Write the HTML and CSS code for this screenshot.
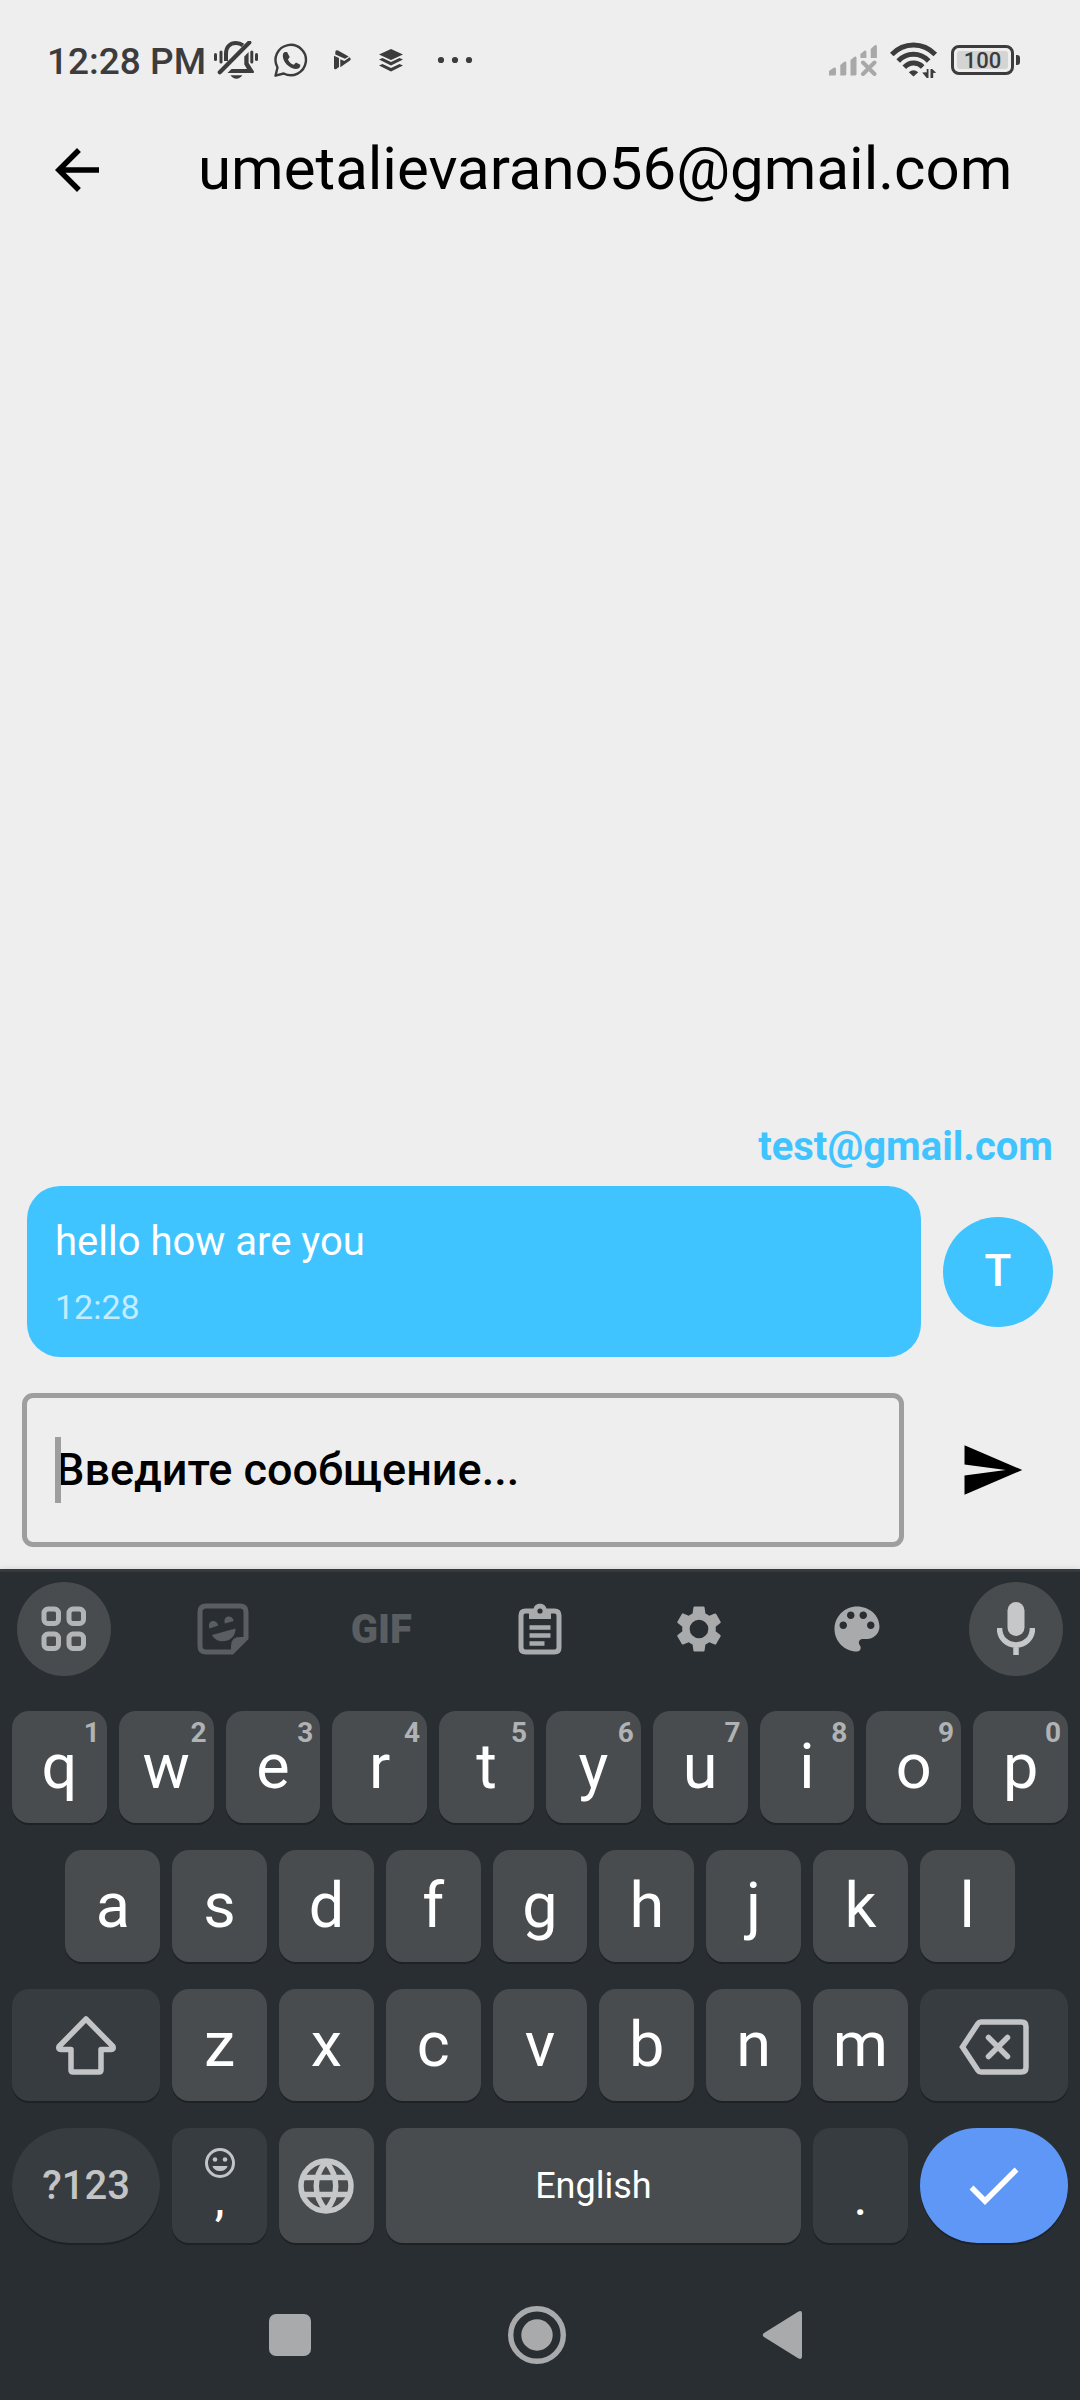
FILE: index.html
```html
<!DOCTYPE html>
<html lang="ru">
<head>
<meta charset="utf-8">
<meta name="viewport" content="width=device-width, initial-scale=1">
<title>Chat</title>
<link rel="stylesheet" href="styles.css">
</head>
<body>
<div class="screen">
  <div class="status">
    <span class="clock">12:28 PM</span>
    <div class="notices">
      <svg width="44" height="38" viewBox="0 0 44 38" fill="currentColor">
        <rect x="0" y="12" width="3" height="8" rx="1.500"/><rect x="5.500" y="9.500" width="3" height="13" rx="1.500"/>
        <rect x="36.300" y="9.500" width="3" height="13" rx="1.500"/><rect x="41" y="12" width="3" height="8" rx="1.500"/>
        <path d="M12 20V12.500C12 6 16 2 22 2c3 0 5 .8 7 2.300" fill="none" stroke="currentColor" stroke-width="4"/>
        <path d="M5.800 31.200L35.300 1.600" stroke="currentColor" stroke-width="4.200" stroke-linecap="round"/>
        <path d="M30.300 15.500l4.300-4.500v11l5.400 8.500q.3 1.500-1 1.500H13.500l4-4H33l-2.700-4.500zM16.500 34.300h11.800c-1.500 2-3.500 3.400-5.900 3.400s-4.400-1.400-5.900-3.400z"/>
      </svg>
      <svg width="34" height="34" viewBox="0 0 34 34" fill="currentColor">
        <path d="M3.500 24.500A15.200 15.200 0 1 1 9.700 30.500L1.500 32.700z" fill="none" stroke="currentColor" stroke-width="2.400" stroke-linejoin="round"/>
        <path d="M8.800 13q0-3.800 2.700-4h1.500l2.700 5-1.700 2.500q1.500 4 5.800 5.300l2.200-2.300 4.300 2.200q.2 4.300-4.800 4.300C15 25.500 8.800 18.500 8.800 13z"/>
      </svg>
      <svg width="37" height="20" viewBox="-10 0 37 20" fill="currentColor">
        <path d="M0 5.800L5 8v9l-3 2.200Q0 19.600 0 18zM1.300 2.500Q1.300-.6 4 .6l10.700 6-3.700 2.200-9.700-4.300zM6.300 9.200l4 1.800 5.200-3.800q2 1.500.8 3L6.300 17.300z"/>
      </svg>
      <svg width="28" height="24" viewBox="-2 0 28 24" fill="currentColor">
        <path d="M12 1L24 6.500 12 12 0 6.500zM0 11.500l3.500-1.600 8.500 4 8.500-4 3.500 1.600-12 6zM0 17.500l3.500-1.600 8.500 4 8.500-4 3.500 1.600-12 6z"/>
      </svg>
      <svg width="68" height="8" viewBox="0 0 68 8" fill="currentColor"><circle cx="20" cy="4" r="3.100"/><circle cx="34" cy="4" r="3.100"/><circle cx="48" cy="4" r="3.100"/></svg>
    </div>
    <div class="radios">
      <svg class="faint" width="48" height="32" viewBox="0 0 48 32" fill="currentColor">
        <path d="M0 31.500V27l5-3.500q2-.5 2 1.500v5q0 1.500-1.500 1.500zM11.300 31.500V21l4-3.300q2-.7 2 1.300v11q0 1.500-1.500 1.500zM21.500 31.500V16l4-3.300q2-.7 2 1.300v16q0 1.500-1.500 1.500zM31.400 14v-4l4-3.300q2-.5 2 1.300v6zM41.700 14V5l4-3.700q2.200-.7 2.200 1.300V14z"/>
        <path d="M34 18.500l11.500 11.500M45.500 18.500L34 30" stroke="currentColor" stroke-width="4" stroke-linecap="round"/>
      </svg>
      <svg width="48" height="36" viewBox="0 0 48 36" fill="none" stroke="currentColor" stroke-width="5">
        <path d="M1.700 12.500C14-.2 33-.2 45.300 12.500M8.200 19c8.500-9 22-9 30.500 0M14.300 25.300c5.200-5.600 13.200-5.600 18.400-.4"/>
        <path d="M23.500 34.500l-4.700-4.300q4.700-4 9.400 0z" fill="currentColor" stroke="none"/>
        <path d="M32.200 30.500l4.500-.2V27h1.800v9h-1.800zM40.500 27h1.700l4 3.700-3 .3v5h-2.700z" fill="currentColor" stroke="none"/>
      </svg>
      <div class="battery"><span class="level">100</span></div>
    </div>
  </div>

  <header class="appbar">
    <button class="back" type="button" aria-label="Back">
      <svg width="66" height="66" viewBox="0 0 24 24"><path d="M20 11H7.830l5.590-5.590L12 4l-8 8 8 8 1.410-1.410L7.830 13H20v-2z"/></svg>
    </button>
    <h1 class="title">umetalievarano56@gmail.com</h1>
  </header>

  <main class="messages">
    <article class="message">
      <p class="sender">test@gmail.com</p>
      <div class="line">
        <div class="bubble">
          <p class="text">hello how are you</p>
          <time class="time">12:28</time>
        </div>
        <div class="avatar">T</div>
      </div>
    </article>
  </main>

  <form class="composer">
    <div class="field">
      <span class="caret"></span>
      <input class="entry" type="text" placeholder="Введите сообщение..." aria-label="Введите сообщение">
    </div>
    <button class="send" type="button" aria-label="Send">
      <svg width="66" height="66" viewBox="0 0 24 24"><path d="M2.010 21L23 12 2.010 3 2 10l15 2-15 2z"/></svg>
    </button>
  </form>

  <section class="keyboard">
    <div class="tools">
      <button class="tool round" type="button" aria-label="Menu">
        <svg width="46" height="46" viewBox="0 0 46 46" fill="none" stroke="currentColor" stroke-width="5"><rect x="3" y="3" width="14.500" height="14.500" rx="4"/><rect x="28" y="3" width="14.500" height="14.500" rx="4"/><rect x="3" y="28" width="14.500" height="14.500" rx="4"/><rect x="28" y="28" width="14.500" height="14.500" rx="4"/></svg>
      </button>
      <button class="tool off" type="button" aria-label="Stickers">
        <svg width="52" height="52" viewBox="0 0 52 52" fill="currentColor">
          <path d="M35 49H9q-6 0-6-6V9q0-6 6-6h34q6 0 6 6v26z" fill="none" stroke="currentColor" stroke-width="5"/>
          <path d="M34 49V43q0-9 9-9h6v2L36 50z"/>
          <path d="M12.500 25.500c-3-9 7.500-10 8.800-3zM28 20.500c-3-8 7.500-9.500 8.800-2.500zM15 32l23.500-6.500c.5 14-18.500 17-23.500 6.500z"/>
        </svg>
      </button>
      <button class="tool off gif" type="button">GIF</button>
      <button class="tool" type="button" aria-label="Clipboard">
        <svg width="44" height="52" viewBox="0 0 44 52" fill="none" stroke="currentColor">
          <path d="M7.500 8h29q4.500 0 4.500 4.500v32q0 4.500-4.500 4.500h-29Q3 49 3 44.500v-32Q3 8 7.500 8z" stroke-width="5"/>
          <path d="M11 6h4.500c1-7 12-7 13 0H33v10H11z" fill="currentColor" stroke="none"/>
          <circle class="hole" cx="22" cy="8" r="2.600"/>
          <path d="M11.500 24.500h21M11.500 32.500h21M11.500 40.500h15" stroke-width="4.500"/>
        </svg>
      </button>
      <button class="tool" type="button" aria-label="Settings">
        <svg width="56" height="56" viewBox="0 0 24 24" fill="currentColor"><path d="M19.140 12.940c.04-.3.06-.61.06-.94 0-.32-.02-.64-.07-.94l2.030-1.580c.18-.14.23-.41.12-.61l-1.920-3.320c-.12-.22-.37-.29-.59-.22l-2.390.96c-.5-.38-1.030-.7-1.620-.94l-.36-2.540c-.04-.24-.24-.41-.48-.41h-3.840c-.24 0-.43.17-.47.41l-.36 2.540c-.59.24-1.130.57-1.620.94l-2.390-.96c-.22-.08-.47 0-.59.22L2.740 8.870c-.12.21-.08.47.12.61l2.030 1.580c-.05.3-.09.63-.09.94s.02.64.07.94l-2.030 1.580c-.18.14-.23.41-.12.61l1.920 3.320c.12.22.37.29.59.22l2.390-.96c.5.38 1.030.7 1.620.94l.36 2.540c.05.24.24.41.48.41h3.840c.24 0 .44-.17.47-.41l.36-2.540c.59-.24 1.130-.56 1.620-.94l2.390.96c.22.08.47 0 .59-.22l1.920-3.320c.12-.22.07-.47-.12-.61l-2.010-1.580zM12 16a4 4 0 110-8 4 4 0 010 8z"/></svg>
      </button>
      <button class="tool" type="button" aria-label="Theme">
        <svg width="60" height="60" viewBox="0 0 24 24" fill="currentColor"><path d="M12 3c-4.970 0-9 4.030-9 9s4.030 9 9 9c.83 0 1.500-.67 1.500-1.500 0-.39-.15-.74-.39-1.010-.23-.26-.38-.61-.38-.99 0-.83.67-1.500 1.500-1.500H16c2.760 0 5-2.240 5-5 0-4.420-4.030-8-9-8zm-5.500 9c-.83 0-1.500-.67-1.500-1.500S5.670 9 6.500 9 8 9.670 8 10.500 7.330 12 6.500 12zm3-4C8.670 8 8 7.330 8 6.500S8.670 5 9.500 5s1.500.67 1.500 1.500S10.330 8 9.500 8zm5 0c-.83 0-1.500-.67-1.500-1.500S13.670 5 14.500 5s1.500.67 1.500 1.500S15.330 8 14.500 8zm3 4c-.83 0-1.500-.67-1.500-1.500S16.670 9 17.500 9s1.500.67 1.500 1.500-.67 1.500-1.500 1.500z"/></svg>
      </button>
      <button class="tool round mic" type="button" aria-label="Voice input">
        <svg width="38" height="54" viewBox="0 0 38 54" fill="currentColor"><rect x="10.500" y="0" width="17" height="34" rx="8.500"/><path d="M2.500 26c0 22.500 33 22.500 33 0M19 42v11" fill="none" stroke="currentColor" stroke-width="5.500"/></svg>
      </button>
    </div>

    <div class="keys">
      <button class="key" type="button">q<span class="hint">1</span></button>
      <button class="key" type="button">w<span class="hint">2</span></button>
      <button class="key" type="button">e<span class="hint">3</span></button>
      <button class="key" type="button">r<span class="hint">4</span></button>
      <button class="key" type="button">t<span class="hint">5</span></button>
      <button class="key" type="button">y<span class="hint">6</span></button>
      <button class="key" type="button">u<span class="hint">7</span></button>
      <button class="key" type="button">i<span class="hint">8</span></button>
      <button class="key" type="button">o<span class="hint">9</span></button>
      <button class="key" type="button">p<span class="hint">0</span></button>

      <button class="key indent" type="button">a</button>
      <button class="key" type="button">s</button>
      <button class="key" type="button">d</button>
      <button class="key" type="button">f</button>
      <button class="key" type="button">g</button>
      <button class="key" type="button">h</button>
      <button class="key" type="button">j</button>
      <button class="key" type="button">k</button>
      <button class="key" type="button">l</button>

      <button class="key wide dark" type="button" aria-label="Shift">
        <svg width="62" height="62" viewBox="0 0 62 62" fill="none" stroke="currentColor" stroke-width="5.500" stroke-linejoin="round"><path d="M31 5L58 32.500q1 3-2 3H46V56q0 2-2 2H18q-2 0-2-2V35.500H6q-3 0-2-3z"/></svg>
      </button>
      <button class="key" type="button">z</button>
      <button class="key" type="button">x</button>
      <button class="key" type="button">c</button>
      <button class="key" type="button">v</button>
      <button class="key" type="button">b</button>
      <button class="key" type="button">n</button>
      <button class="key" type="button">m</button>
      <button class="key wide dark" type="button" aria-label="Backspace">
        <svg width="70" height="60" viewBox="0 -4 70 60" fill="none" stroke="currentColor" stroke-width="5.500"><path d="M22 3h40.500q4.500 0 4.500 4.500v41q0 4.500-4.500 4.500H22q-2 0-3-1.500L3.500 28 19 4.500Q20 3 22 3z"/><path d="M29.500 18.500l19 19M48.500 18.500l-19 19" stroke-linecap="round"/></svg>
      </button>

      <button class="key wide dark pill label" type="button">?123</button>
      <button class="key dark stack" type="button">
        <svg width="30" height="30" viewBox="0 0 30 30" fill="currentColor"><circle cx="15" cy="15" r="13.500" fill="none" stroke="currentColor" stroke-width="3"/><circle cx="10" cy="11.500" r="2.300"/><circle cx="20" cy="11.500" r="2.300"/><path d="M7.500 18h15c-1.500 6.800-13.500 6.800-15 0z"/></svg>
        <span class="mark">,</span>
      </button>
      <button class="key" type="button" aria-label="Language">
        <svg class="globe" width="56" height="56" viewBox="0 0 56 56" fill="none" stroke="currentColor" stroke-width="5.500"><circle cx="28" cy="28" r="25"/><path d="M28 3.500C15 19 15 37 28 52.500M28 3.500C41 19 41 37 28 52.500M5 19.500h46M5 36.500h46"/></svg>
      </button>
      <button class="key space" type="button">English</button>
      <button class="key dark stack" type="button"><span class="mark">.</span></button>
      <button class="key wide enter pill" type="button" aria-label="Done">
        <svg width="50" height="38" viewBox="0 0 50 38" fill="none" stroke="currentColor" stroke-width="5.500"><path d="M2.500 20.500L16 34 47.500 2.500"/></svg>
      </button>
    </div>

    <nav class="system">
      <button class="nav" type="button" aria-label="Recent apps"><svg width="58" height="58" viewBox="0 0 58 58" fill="currentColor"><rect x="8" y="8" width="42" height="42" rx="7"/></svg></button>
      <button class="nav" type="button" aria-label="Home"><svg width="58" height="58" viewBox="0 0 58 58" fill="currentColor"><circle cx="29" cy="29" r="26.300" fill="none" stroke="currentColor" stroke-width="5.400"/><circle cx="29" cy="29" r="15.700"/></svg></button>
      <button class="nav" type="button" aria-label="Back"><svg width="58" height="58" viewBox="0 0 58 58" fill="currentColor"><path d="M9 27L43.500 5.500Q47 4 47 7.500v43Q47 54 43.500 52.500L9 31q-2.500-2 0-4z"/></svg></button>
    </nav>
  </section>
</div>
</body>
</html>
```
FILE: styles.css
```css
* {
  box-sizing: border-box;
}

body {
  margin: 0;
  background: #eeeeee;
  font-family: Roboto, "Noto Sans", sans-serif;
}

h1,
p {
  margin: 0;
}

button {
  padding: 0;
  border: 0;
  background: none;
  color: inherit;
  font: inherit;
}

svg {
  display: block;
  flex: none;
}

.screen {
  display: flex;
  flex-direction: column;
  min-height: 100vh;
}

/* Status bar */
.status {
  display: flex;
  align-items: center;
  padding: 28px 60px 0 47px;
  height: 92px;
  color: #3c3c3c;
}

.clock {
  padding-top: 4px;
  font-size: 37px;
  font-weight: 500;
  line-height: 44px;
}

.notices {
  display: flex;
  align-items: center;
  gap: 16px;
  margin-left: 8px;
}

.radios {
  display: flex;
  align-items: center;
  gap: 13px;
  margin-left: auto;
}

.faint {
  color: #a8a8a8;
}

.battery {
  position: relative;
  width: 63px;
  height: 30px;
  margin-right: 6px;
  padding: 3px;
  border: 3px solid #3c3c3c;
  border-radius: 8px;
}

.battery::after {
  content: "";
  position: absolute;
  top: 7px;
  right: -9px;
  width: 4px;
  height: 10px;
  border-radius: 0 3px 3px 0;
  background: #3c3c3c;
}

.level {
  display: block;
  border-radius: 3px;
  background: #d4d4d4;
  font-size: 22px;
  font-weight: 500;
  line-height: 20px;
  height: 18px;
  text-align: center;
}

/* App bar */
.appbar {
  display: flex;
  align-items: center;
  height: 156px;
  color: #000;
}

.back {
  display: flex;
  justify-content: center;
  width: 154px;
}

.title {
  flex: 1;
  margin-left: 44px;
  padding-bottom: 2px;
  font-size: 60px;
  font-weight: 400;
  line-height: 72px;
}

/* Conversation */
.messages {
  flex: 1;
  display: flex;
  flex-direction: column;
  justify-content: flex-end;
  padding: 0 27px 36px;
}

.sender {
  margin-bottom: 12px;
  color: #40c4ff;
  font-size: 40px;
  font-weight: 700;
  line-height: 55px;
  text-align: right;
}

.line {
  display: flex;
  align-items: center;
  gap: 22px;
}

.bubble {
  flex: 1;
  padding: 28px;
  border-radius: 33px;
  background: #40c4ff;
  color: #fff;
}

.text {
  font-size: 40px;
  line-height: 55px;
}

.time {
  display: block;
  margin-top: 16px;
  color: rgba(255, 255, 255, 0.7);
  font-size: 34px;
  line-height: 44px;
}

.avatar {
  width: 110px;
  height: 110px;
  border-radius: 50%;
  background: #40c4ff;
  color: #fff;
  font-size: 44px;
  font-weight: 500;
  line-height: 108px;
  text-align: center;
}

/* Composer */
.composer {
  display: flex;
  gap: 22px;
  padding: 0 22px 22px;
}

.field {
  position: relative;
  flex: 1;
  border: 5px solid #9e9e9e;
  border-radius: 11px;
}

.caret {
  position: absolute;
  top: 39px;
  left: 28px;
  width: 6px;
  height: 66px;
  background: #9e9e9e;
}

.entry {
  display: block;
  width: 100%;
  height: 144px;
  padding: 0 28px 2px 29px;
  border: 0;
  outline: 0;
  background: none;
  color: #000;
  font: 500 45px Roboto, "Noto Sans", sans-serif;
}

.entry::placeholder {
  color: #000;
  opacity: 1;
}

.send {
  display: flex;
  align-items: center;
  justify-content: center;
  width: 132px;
}

/* Keyboard */
.keyboard {
  padding: 10px 12px 0;
  border-top: 3px solid #343a3f;
  background: #292e32;
  box-shadow: 0 0 6px rgba(0, 0, 0, 0.12);
  color: #fff;
}

.tools {
  display: flex;
  justify-content: space-between;
  margin-bottom: 35px;
  padding: 0 5px;
  color: #a9aaac;
}

.tool {
  display: flex;
  align-items: center;
  justify-content: center;
  width: 94px;
  height: 94px;
}

.round {
  border-radius: 50%;
  background: #484c4e;
  color: #b3b4b6;
}

.mic {
  color: #c6c7c9;
}

.off {
  color: #5a5e61;
}

.gif {
  font-size: 40px;
  font-weight: 900;
}

.hole {
  fill: #292e32;
  stroke: none;
}

.keys {
  display: grid;
  grid-template-columns: repeat(20, 1fr);
  grid-template-rows: 112px 112px 112px 115px;
  gap: 27px 12px;
}

.key {
  position: relative;
  grid-column: span 2;
  display: flex;
  align-items: center;
  justify-content: center;
  border-radius: 17px;
  background: #484c4e;
  box-shadow: 0 2px 0 #1e2225;
  font-size: 63px;
  line-height: 74px;
}

.indent {
  grid-column: 2 / span 2;
}

.wide {
  grid-column: span 3;
}

.space {
  grid-column: span 8;
  font-size: 36px;
}

.dark {
  background: #373c40;
  color: #c3c4c6;
}

.pill {
  border-radius: 58px;
}

.label {
  font-size: 40px;
  font-weight: 500;
}

.enter {
  background: #5f97f6;
  color: #fff;
}

.globe {
  color: #c6c7c9;
}

.hint {
  position: absolute;
  top: 8px;
  right: 7px;
  color: #b1b2b4;
  font-size: 28px;
  font-weight: 700;
  line-height: 28px;
}

.stack {
  flex-direction: column;
  justify-content: flex-end;
  padding-bottom: 21px;
}

.mark {
  color: #fff;
  font-size: 44px;
  font-weight: 500;
  line-height: 44px;
}

/* System navigation */
.system {
  display: grid;
  grid-template-columns: repeat(3, 1fr);
  align-items: center;
  height: 157px;
  padding: 27px 161px 0 155px;
  color: #a9aaac;
}

.nav {
  display: flex;
  justify-content: center;
}
```
